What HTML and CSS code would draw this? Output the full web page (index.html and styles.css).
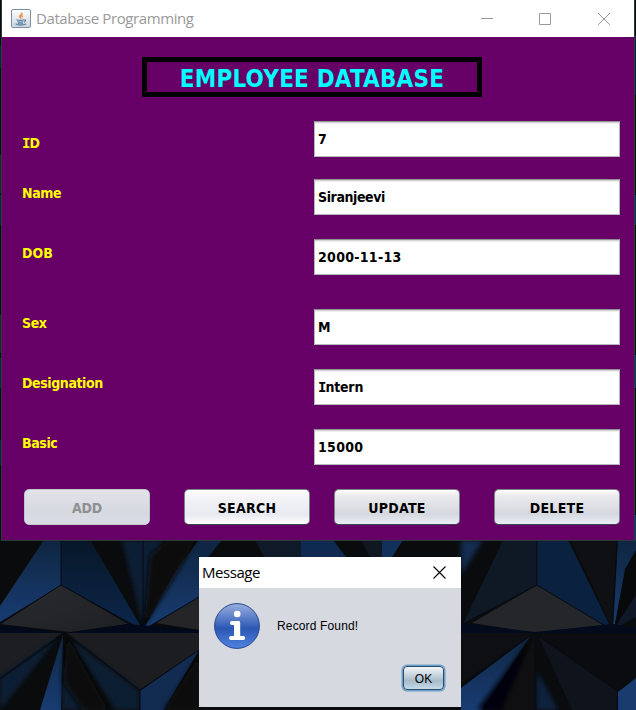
FILE: index.html
```html
<!DOCTYPE html>
<html lang="en">
<head>
<meta charset="utf-8">
<title>Database Programming</title>
<link rel="stylesheet" href="styles.css">
</head>
<body>
<svg class="wallpaper" width="636" height="710" viewBox="0 0 636 710" aria-hidden="true">
  <defs>
    <linearGradient id="blueA" x1="0" y1="0" x2="0" y2="1"><stop offset="0" stop-color="#102a48"/><stop offset="1" stop-color="#1b4482"/></linearGradient>
    <linearGradient id="blueB" x1="0" y1="0" x2="0" y2="1"><stop offset="0" stop-color="#071a2c"/><stop offset="1" stop-color="#0d2b55"/></linearGradient>
    <linearGradient id="grey" x1="0" y1="0" x2="1" y2="1"><stop offset="0" stop-color="#303135"/><stop offset="1" stop-color="#222327"/></linearGradient>
    <filter id="soft" x="-20%" y="-20%" width="140%" height="140%"><feGaussianBlur stdDeviation="2.5"/></filter>
  </defs>
  <rect width="636" height="710" fill="#0b0c0e"/>
  <rect x="0" y="45" width="3" height="23" fill="#13263c"/>
  <rect x="0" y="155" width="3" height="38" fill="#292b2d"/>
  <rect x="0" y="195" width="3" height="30" fill="#102b49"/>
  <rect x="0" y="315" width="3" height="38" fill="#292b2d"/>
  <rect x="0" y="358" width="3" height="30" fill="#102b49"/>
  <rect x="0" y="440" width="3" height="25" fill="#0e2845"/>
  <rect x="634" y="35" width="2" height="60" fill="#10263e"/>
  <rect x="634" y="195" width="2" height="30" fill="#123a55"/>
  <rect x="634" y="355" width="2" height="33" fill="#164061"/>
  <rect x="634" y="515" width="2" height="40" fill="#173c70"/>

  <path d="M44 540H61V585L0 622V606Z" fill="url(#blueA)"/>
  <path d="M61 540H90L143 630L61 585Z" fill="url(#blueB)"/>
  <path d="M122 540H163L143 625Z" fill="#0d223b" filter="url(#soft)"/>
  <path d="M199 540V598L143 630L176 570Z" fill="url(#blueA)"/>
  <path d="M150 555L168 540H195L180 568L144 626Z" fill="#0a0a0b" filter="url(#soft)"/>
  <path d="M61 585L128 624L70 632L0 624Z" fill="url(#grey)"/>
  <path d="M156 623L199 598V630Z" fill="#29292d"/>
  <path d="M0 625L66 633L128 624L199 630V633H0Z" fill="#020a1d"/>
  <path d="M0 633H62L0 677Z" fill="#202126"/>
  <path d="M66 633H199V650L140 690Z" fill="#1f2024"/>
  <path d="M0 678L58 637L0 710Z" fill="#10233b" filter="url(#soft)"/>
  <path d="M63 635L61 710H40Z" fill="url(#blueA)"/>
  <path d="M68 637L139 691V710H62L63 660L88 710H116Z" fill="#0c2038" filter="url(#soft)"/>
  <path d="M67 635L63 682L82 710H108Z" fill="#080809" filter="url(#soft)"/>
  <path d="M140 691L199 650L164 710H140Z" fill="#14305a"/>
  <path d="M199 656L164 710H199Z" fill="#0b0c0f" filter="url(#soft)"/>
  <path d="M61 540V585L0 624M61 585L135 626M143 540V630L199 597M65 633L0 679M66 633L140 690L199 650M140 690V710" fill="none" stroke="#050b16"/>

  <path d="M199 540H222L208 557H199Z" fill="#112b4c"/>
  <path d="M255 540H301V557H264Z" fill="#101c2b"/>
  <path d="M301 540H333L346 557H301Z" fill="#102f5b"/>
  <path d="M361 540H382V557H370Z" fill="#101923"/>
  <path d="M382 540H403L392 557H382Z" fill="#143765"/>

  <path d="M461 540H483L461 575Z" fill="#12305a" filter="url(#soft)"/>
  <path d="M503 540H537V585L463 624Z" fill="#101b29"/>
  <path d="M537 540H568L612 630L537 585Z" fill="#0b2548"/>
  <path d="M571 540H617L612 628Z" fill="#111216"/>
  <path d="M618 540H636V555L613 630Z" fill="url(#blueA)"/>
  <path d="M625 569L636 550V601L614 629Z" fill="#08090c"/>
  <path d="M614 629L636 595V617Z" fill="#101b2c"/>
  <path d="M537 585L604 625L535 633L472 623Z" fill="#292b2f"/>
  <path d="M461 623L535 632L613 624L636 628V633H461Z" fill="#020b1e"/>
  <path d="M461 633H533L461 684Z" fill="#0e1014"/>
  <path d="M535 633H636V677L617 691Z" fill="#0c0d11"/>
  <path d="M461 688L531 635L482 710H461Z" fill="url(#blueA)"/>
  <path d="M534 635V710H501Z" fill="#101012"/>
  <path d="M532 637L501 710H477Z" fill="#050608" filter="url(#soft)"/>
  <path d="M539 637L617 691V710H572Z" fill="#10151f"/>
  <path d="M537 671L558 710H537Z" fill="#0b2547" filter="url(#soft)"/>
  <path d="M618 692L636 678V710H618Z" fill="#1c427c"/>
  <path d="M537 540V585L463 624M537 585L612 630L617 540M534 633L461 687M535 633L617 691V710M535 635V710" fill="none" stroke="#060c16"/>
</svg>

<main class="window">
  <header class="titlebar">
    <svg class="java" width="20" height="20" viewBox="0 0 20 20" aria-hidden="true">
      <defs><linearGradient id="jbg" x1="0" y1="0" x2="0" y2="1"><stop offset="0" stop-color="#fff"/><stop offset="1" stop-color="#ccd3dc"/></linearGradient></defs>
      <rect x=".5" y=".5" width="19" height="18" rx="1.5" fill="url(#jbg)" stroke="#7990a8"/>
      <path d="M10.700 3C11.500 5.400 7.200 6 8.500 8.300L9.700 10C9.300 7.800 12.600 6.500 10.700 3M12 6.500C9.800 7.500 11.900 8.400 10.600 10" fill="#ef8c3c" stroke="#ef8c3c" stroke-width=".4"/>
      <path d="M5.500 10.700Q9.500 12.100 13 10.700M6.500 12.800Q9.500 13.800 12.300 12.800M4.500 14.800Q9 17.300 15 15M13 11Q16 10.600 13.200 13.300" fill="none" stroke="#537ea2" stroke-width="1.100"/>
      <path d="M7 14.500Q9.500 15.400 12 14.500" fill="none" stroke="#537ea2"/>
    </svg>
    <span class="caption">Database Programming</span>
    <svg class="controls" width="130" height="14" viewBox="0 0 130 14" fill="none" stroke="#999" aria-hidden="true">
      <path d="M0 6.500H12M58.500 1.500H69.500V12.500H58.500ZM117 1L129 13M129 1L117 13"/>
    </svg>
  </header>

  <section class="content">
    <h1 class="heading"><span>EMPLOYEE DATABASE</span></h1>
    <div class="form">
      <div class="row first"><span class="label low"><span class="serif-i">I</span>D</span><div class="field">7</div></div>
      <div class="row second"><span class="label">Name</span><div class="field tight">Siranjeevi</div></div>
      <div class="row"><span class="label wide">DOB</span><div class="field digits">2000-11-13</div></div>
      <div class="row gap"><span class="label">Sex</span><div class="field">M</div></div>
      <div class="row"><span class="label">Designation</span><div class="field"><span class="serif-i">I</span>ntern</div></div>
      <div class="row"><span class="label">Basic</span><div class="field digits">15000</div></div>
    </div>
    <div class="buttons">
      <button class="btn add" disabled>ADD</button>
      <button class="btn search">SEARCH</button>
      <button class="btn update">UPDATE</button>
      <button class="btn delete">DELETE</button>
    </div>
  </section>
</main>

<section class="dialog">
  <header class="dialog-title">
    <span>Message</span>
    <svg width="13" height="13" viewBox="0 0 13 13" fill="none" stroke="#000" stroke-width="1.100" aria-hidden="true"><path d="M.5.500L12.500 12.500M12.500.500L.5 12.500"/></svg>
  </header>
  <div class="message">
    <svg width="46" height="46" viewBox="0 0 46 46" aria-hidden="true">
      <defs><linearGradient id="info" x1="0" y1="0" x2="0" y2="1"><stop offset="0" stop-color="#9aafe0"/><stop offset=".48" stop-color="#3a64bb"/><stop offset=".55" stop-color="#2b57b2"/><stop offset="1" stop-color="#5282e0"/></linearGradient></defs>
      <circle cx="23" cy="23" r="22.400" fill="url(#info)" stroke="#26478d"/>
      <circle cx="23.200" cy="11" r="3.300" fill="#fff"/>
      <path d="M18 20H24M17 35H29.200" fill="none" stroke="#fff" stroke-width="4" stroke-linecap="round"/>
      <path d="M20 18H24.500Q26.200 18 26.200 20V35H20Z" fill="#fff"/>
    </svg>
    <span>Record Found!</span>
  </div>
  <button class="ok">OK</button>
</section>
</body>
</html>
```
FILE: styles.css
```css
* { box-sizing: border-box; }

body {
  margin: 0;
  width: 636px;
  height: 710px;
  overflow: hidden;
  background: #08090b;
  font-family: "DejaVu Sans Condensed", "DejaVu Sans", sans-serif;
}

.wallpaper { position: absolute; left: 0; top: 0; z-index: -1; opacity: .88; }

.window {
  width: 634px;
  height: 541px;
  margin-left: 1px;
  border: solid #2c3a3c;
  border-width: 0 1px 1px;
}

.titlebar {
  display: flex;
  align-items: center;
  height: 37px;
  padding: 0 23px 0 9px;
  background: #fff;
}

.caption {
  flex: 1;
  margin-left: 5px;
  padding-bottom: 2px;
  font: 15px/20px "Open Sans", sans-serif;
  letter-spacing: -.4px;
  color: #999;
}

.controls { display: block; }

.content { height: 503px; padding-top: 20px; background: #660066; }

.heading {
  display: flex;
  align-items: center;
  justify-content: center;
  width: 340px;
  height: 40px;
  margin: 0 0 24px 140px;
  padding-top: 3px;
  border: 5px solid #000;
  font: bold 24px/30px "DejaVu Sans Condensed", "DejaVu Sans", sans-serif;
  font-stretch: condensed;
  letter-spacing: .2px;
  white-space: nowrap;
  color: #0ff;
}

.form {
  font-size: 14px;
  font-weight: bold;
  font-stretch: condensed;
  line-height: 18px;
}

.row { display: flex; margin-bottom: 24px; }
.row.first { margin-bottom: 22px; }
.row.gap { margin-top: 34px; }

.label {
  width: 292px;
  margin-left: 20px;
  padding-top: 5px;
  color: #ff0;
  letter-spacing: -.4px;
}
.label.low { padding-top: 13px; }
.label.wide { letter-spacing: .1px; }
.serif-i {
  font-family: "DejaVu Sans Mono", monospace;
  font-stretch: normal;
  line-height: 1;
  letter-spacing: -1px;
}

.field {
  width: 306px;
  height: 36px;
  padding: 8px 3px;
  border: 1px solid #b5b8ba;
  border-top-color: #8f8f91;
  background: linear-gradient(#d6d6d6 0 1px, #eee 1px 2px, #fff 2px);
  color: #000;
  letter-spacing: -.2px;
}
.field.tight { letter-spacing: -.4px; }
.field.digits { letter-spacing: .3px; }

.buttons { display: flex; margin-left: 22px; }

.btn {
  width: 126px;
  height: 36px;
  margin-right: 34px;
  padding: 2px 0 0;
  border: 1px solid #7b828b;
  border-bottom-color: #3b4650;
  border-radius: 5px;
  background: linear-gradient(#fff, #ececef 15%, #d5d8df 70%, #e9edf5);
  font: bold 14px/18px "DejaVu Sans Condensed", "DejaVu Sans", sans-serif;
  font-stretch: condensed;
  letter-spacing: .3px;
  color: #000;
}
.btn.add {
  border-color: #c2c5cc;
  background: linear-gradient(#e1e3e8, #d6d9e0 65%, #d9dce4);
  letter-spacing: -.2px;
  color: #8e8f91;
}
.btn.search {
  margin-right: 24px;
  background: linear-gradient(#fff, #f4f4f7 20%, #e7eaf0 72%, #fff);
}
.btn.delete { margin-right: 0; }

.dialog {
  width: 262px;
  height: 150px;
  margin: 16px 0 0 199px;
  background: #d6d9e0;
  font-family: "Liberation Sans", Arial, sans-serif;
}

.dialog-title {
  display: flex;
  align-items: center;
  justify-content: space-between;
  height: 31px;
  padding: 0 15px 0 3px;
  background: #fff;
  font: 15px/20px "Open Sans", sans-serif;
  letter-spacing: -.45px;
  color: #000;
}
.dialog-title span { padding-bottom: 2px; }

.message {
  display: flex;
  align-items: center;
  gap: 17px;
  padding: 15px 0 0 15px;
  font-size: 12px;
  letter-spacing: .15px;
  color: #000;
}

.ok {
  display: block;
  width: 41px;
  height: 24px;
  margin: 17px 0 0 204px;
  padding: 1px 0 0;
  border: 1px solid #304c64;
  border-radius: 4px;
  background: linear-gradient(#f1f5f8, #c2d0dc 42%, #a6bac9 62%, #c5dbea);
  box-shadow: 0 0 0 1.500px #69a0cd;
  font: 12px/14px "Liberation Sans", Arial, sans-serif;
  color: #000;
}
```
